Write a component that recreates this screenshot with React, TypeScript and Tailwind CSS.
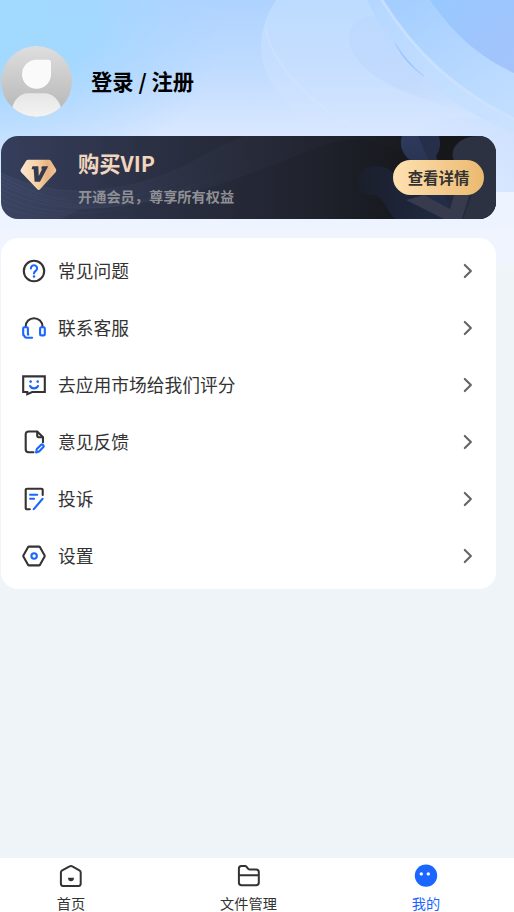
import type { ReactNode } from 'react';

type MenuItem = {
  label: string;
  icon: ReactNode;
};

const QuestionIcon = () => (
  <svg viewBox="0 0 24 24" className="h-6 w-6" fill="none" strokeLinecap="round" strokeLinejoin="round">
    <circle cx="12" cy="12" r="10.2" stroke="#333" strokeWidth="2.1" />
    <path d="M8.9 9.4A3.1 3.1 0 1 1 13.6 12C12.5 12.7 12 13.2 12 14.5" stroke="#1a66ff" strokeWidth="2.1" />
    <circle cx="12" cy="17.6" r="1.25" fill="#1a66ff" />
  </svg>
);

const HeadsetIcon = () => (
  <svg viewBox="0 0 24 24" className="h-6 w-6 overflow-visible" fill="none" strokeLinecap="round" strokeLinejoin="round">
    <path d="M3.7 10.6C3.7 5.6 7.4 2.3 12 2.3S20.5 5.6 20.5 10.6" stroke="#333" strokeWidth="2.1" />
    <rect x="18.1" y="11.2" width="4.7" height="8.2" rx="1.2" stroke="#1a66ff" strokeWidth="2.1" />
    <path d="M5.9 18.6V12.2Q5.9 11.2 4.9 11.2H2.3Q1.2 11.2 1.2 12.3V18.8Q1.2 19.4 2.1 19.4V19.6Q2.6 21.7 4.8 21.7H10.1M5.9 18.6H6.3" stroke="#1a66ff" strokeWidth="2.1" />
  </svg>
);

const RatingIcon = () => (
  <svg viewBox="0 0 24 24" className="h-6 w-6 overflow-visible" fill="none" strokeLinecap="round">
    <path d="M1.2 3.4H22.8V19H10.2L5.3 21.1V19H1.2Z" stroke="#333" strokeWidth="2.1" strokeLinejoin="miter" />
    <circle cx="8.6" cy="8.6" r="1.3" fill="#1a66ff" />
    <circle cx="15.7" cy="8.6" r="1.3" fill="#1a66ff" />
    <path d="M8.1 13Q9.2 15.4 12 15.4T16 13" stroke="#1a66ff" strokeWidth="2.1" />
  </svg>
);

const FeedbackIcon = () => (
  <svg viewBox="0 0 24 24" className="h-6 w-6" fill="none" strokeLinecap="round" strokeLinejoin="round">
    <path d="M11.5 22.2H6.7Q3.7 22.2 3.7 19.2V4.3Q3.7 1.5 6.7 1.5H15.2L21 7.2V12.2" stroke="#333" strokeWidth="2.1" />
    <path d="M15.2 1.8V5.6Q15.2 7.2 16.8 7.2H20.6" stroke="#333" strokeWidth="2.1" />
    <path d="M14.1 22.4L14.8 19.1L19.2 14.8Q20 14.1 20.7 14.8L21.5 15.6Q22.1 16.3 21.4 17L17.1 21.5Z" stroke="#1a66ff" strokeWidth="2.1" />
  </svg>
);

const ComplaintIcon = () => (
  <svg viewBox="0 0 24 24" className="h-6 w-6" fill="none" strokeLinecap="round" strokeLinejoin="round">
    <path d="M7.8 22.3H5.1Q3.7 22.3 3.7 20.9V3.1Q3.7 1.7 5.1 1.7H19.2Q20.7 1.7 20.7 3.1V8" stroke="#333" strokeWidth="2.1" />
    <path d="M8.1 7.8H15.2M8.1 11.7H12.1M20.6 11.8L11.8 22.1" stroke="#1a66ff" strokeWidth="2.1" />
  </svg>
);

const SettingsIcon = () => (
  <svg viewBox="0 0 24 24" className="h-6 w-6" fill="none" strokeLinejoin="round">
    <path d="M7 2.6H17Q17.6 2.6 18 3.2L22.5 11.2Q22.9 12 22.5 12.8L18 20.8Q17.6 21.4 17 21.4H7Q6.4 21.4 6 20.8L1.5 12.8Q1.1 12 1.5 11.2L6 3.2Q6.4 2.6 7 2.6Z" stroke="#333" strokeWidth="2.1" />
    <circle cx="12.1" cy="12" r="2.7" stroke="#1a66ff" strokeWidth="2.1" />
  </svg>
);

const HomeIcon = () => (
  <svg viewBox="0 0 24 24" className="h-6 w-6 shrink-0" fill="none" strokeLinejoin="round">
    <path d="M12 2Q12.7 2 13.3 2.4L20.4 6.4Q21.7 7.2 21.7 8.5V19.8Q21.7 21.9 19.7 21.9H3.9Q1.9 21.9 1.9 19.8V8.5Q1.9 7.2 3.2 6.4L10.6 2.4Q11.3 2 12 2Z" stroke="#333" strokeWidth="2" />
    <path d="M8.9 13.7H15.1Q14.7 17.2 12 17.2T8.9 13.7Z" fill="#333" />
  </svg>
);

const FolderIcon = () => (
  <svg viewBox="0 0 24 24" className="h-6 w-6 shrink-0" fill="none" strokeLinejoin="round">
    <path d="M4.4 2H8.1Q9 2 9.6 2.8L11 4.7Q11.5 5.4 12.4 5.4H19.1Q21.8 5.4 21.8 8V18.5Q21.8 21.3 19.1 21.3H4.6Q1.9 21.3 1.9 18.5V4.5Q1.9 2 4.4 2ZM1.9 11.3H21.8" stroke="#333" strokeWidth="2" />
  </svg>
);

const MineIcon = () => (
  <svg viewBox="0 0 24 24" className="h-6 w-6 shrink-0">
    <circle cx="12" cy="11.6" r="11.2" fill="#1a66ff" />
    <circle cx="7.3" cy="9.9" r="1.7" fill="#fff" />
    <circle cx="14.3" cy="9.9" r="1.7" fill="#fff" />
  </svg>
);

const ChevronIcon = () => (
  <svg viewBox="0 0 10 16" className="h-4 w-2.5" fill="none">
    <path d="M1.8 1.9L7.9 8L1.8 14.1" stroke="#666" strokeWidth="2.1" strokeLinecap="round" strokeLinejoin="round" />
  </svg>
);

const Avatar = () => (
  <svg viewBox="0 0 71 71" className="h-[71px] w-[71px]">
    <defs>
      <linearGradient id="avatarBg" x1="0" y1="0" x2="0" y2="1">
        <stop stopColor="#dedede" />
        <stop offset="1" stopColor="#b4b4b4" />
      </linearGradient>
      <linearGradient id="avatarBody" x1="0" y1="0" x2="0" y2="1">
        <stop stopColor="#e6e6e6" />
        <stop offset="1" stopColor="#f3f3f3" />
      </linearGradient>
      <clipPath id="avatarClip">
        <circle cx="35.5" cy="35.5" r="35.5" />
      </clipPath>
    </defs>
    <g clipPath="url(#avatarClip)">
      <rect width="71" height="71" fill="url(#avatarBg)" />
      <path d="M35.5 13.8H47.5Q50 13.8 50 16.3V27.8A14.5 14.5 0 1 1 35.5 13.8Z" fill="#fafafa" />
      <path d="M10 66C12 54 19 47.2 27 47.2H43C52 47.2 59 54 61 66V71H10Z" fill="url(#avatarBody)" />
    </g>
  </svg>
);

const HeaderArt = () => (
  <svg viewBox="0 0 514 265" className="absolute inset-x-0 top-0 h-[265px] w-full">
    <defs>
      <linearGradient id="sky" x1="0" y1="0" x2="0" y2="1">
        <stop stopColor="#aed3ff" />
        <stop offset=".25" stopColor="#bfdbff" />
        <stop offset=".5" stopColor="#d8e7ff" />
        <stop offset=".73" stopColor="#e8f1ff" />
        <stop offset="1" stopColor="#f1f4ff" />
      </linearGradient>
      <radialGradient id="cyan" gradientUnits="userSpaceOnUse" cx="0" cy="0" r="1" gradientTransform="translate(0 10) scale(230 175)">
        <stop stopColor="#a2daff" />
        <stop offset=".4" stopColor="#a2d8ff" stopOpacity=".95" />
        <stop offset=".7" stopColor="#a6d6ff" stopOpacity=".45" />
        <stop offset="1" stopColor="#a9d4ff" stopOpacity="0" />
      </radialGradient>
      <linearGradient id="disc" x1="0" y1="0" x2="0" y2="1">
        <stop stopColor="#bddcff" />
        <stop offset=".5" stopColor="#cce1ff" stopOpacity=".6" />
        <stop offset="1" stopColor="#dae8ff" stopOpacity="0" />
      </linearGradient>
      <linearGradient id="leaf" x1="0" y1="0" x2="1" y2="1">
        <stop stopColor="#b1d0fd" stopOpacity=".25" />
        <stop offset=".5" stopColor="#b9d2fb" stopOpacity=".4" />
        <stop offset="1" stopColor="#d0e1ff" stopOpacity="0" />
      </linearGradient>
      <linearGradient id="outer" gradientUnits="userSpaceOnUse" x1="400" y1="0" x2="480" y2="128">
        <stop stopColor="#a4ceff" />
        <stop offset="1" stopColor="#c2deff" />
      </linearGradient>
      <linearGradient id="band" gradientUnits="userSpaceOnUse" x1="375" y1="0" x2="500" y2="128">
        <stop stopColor="#b5d7ff" />
        <stop offset="1" stopColor="#cbe2ff" />
      </linearGradient>
      <linearGradient id="corner" gradientUnits="userSpaceOnUse" x1="440" y1="0" x2="500" y2="75">
        <stop stopColor="#98c8ff" />
        <stop offset=".5" stopColor="#9ec5fd" />
        <stop offset="1" stopColor="#a3c3fb" />
      </linearGradient>
      <linearGradient id="fade" x1="0" y1="0" x2="1" y2="0">
        <stop stopColor="#c9deff" stopOpacity="0" />
        <stop offset="1" stopColor="#c9deff" stopOpacity=".6" />
      </linearGradient>
    </defs>
    <rect width="514" height="265" fill="url(#sky)" />
    <rect width="240" height="190" fill="url(#cyan)" />
    <path d="M276 0C248 42 256 95 330 135H514V0Z" fill="url(#disc)" />
    <path d="M266 28C268 62 320 117 375 135" fill="none" stroke="#dcecff" strokeOpacity=".3" strokeWidth="2" />
    <path d="M380 15C361 14 348 25 349 39C350 70 405 105 514 119L422 73C402 57 392 37 380 15Z" fill="url(#leaf)" />
    <path d="M410 132Q470 102 514 133V192H410Z" fill="url(#fade)" />
    <path d="M367 0C388 44 438 105 514 133V119C455 90 414 52 382 0Z" fill="url(#band)" />
    <path d="M382 0C414 52 455 90 514 119V0Z" fill="url(#outer)" />
    <path d="M382 0C414 52 455 90 514 119" fill="none" stroke="#cde3ff" strokeOpacity=".75" strokeWidth="3" />
    <path d="M430 0C452 32 477 56 514 73V0Z" fill="url(#corner)" />
    <path d="M395 43C402 57 411 67 424 76C413 67 403 56 395 43Z" fill="#97c4fd" stroke="#97c4fd" strokeOpacity=".5" strokeWidth=".8" />
    <rect y="192" width="514" height="73" fill="#eff4ff" fillOpacity=".75" />
  </svg>
);

const BannerArt = () => (
  <svg viewBox="0 0 495 83" className="absolute inset-0 h-full w-full">
    <defs>
      <linearGradient id="banner" x1="0" y1="0" x2="1" y2="0">
        <stop stopColor="#353e5b" />
        <stop offset=".35" stopColor="#292e40" />
        <stop offset=".65" stopColor="#1f212b" />
        <stop offset=".85" stopColor="#15171b" />
        <stop offset="1" stopColor="#16181c" />
      </linearGradient>
      <linearGradient id="wave" x1="0" y1="0" x2="1" y2="0">
        <stop stopColor="#59658a" stopOpacity=".5" />
        <stop offset="1" stopColor="#3d4355" stopOpacity=".12" />
      </linearGradient>
      <linearGradient id="knob" x1="0" y1="0" x2="1" y2="0">
        <stop stopColor="#1b1f2b" />
        <stop offset="1" stopColor="#202a45" />
      </linearGradient>
      <linearGradient id="stem" x1="0" y1="0" x2="0" y2="1">
        <stop stopColor="#2e3a5c" />
        <stop offset="1" stopColor="#222b45" />
      </linearGradient>
    </defs>
    <rect width="495" height="83" fill="url(#banner)" />
    <path d="M0 37C55 64 115 58 170 36C208 19 219 9 243 0H400L430 30C370-2 350-1 316 12C230 45 170 71 80 73L60 83H0Z" fill="url(#wave)" fillOpacity=".3" />
    <g fill="none" stroke="url(#wave)" strokeOpacity=".7" strokeWidth=".6">
      <path d="M0 40C75 84 140 68 240 18" />
      <path d="M0 44C70 84 140 76 250 24" />
      <path d="M0 48C70 84 130 78 245 30" />
      <path d="M0 53C50 78 110 82 215 44" />
      <path d="M0 58C40 80 90 82 160 66" />
      <path d="M0 63C30 80 65 82 105 74" />
      <path d="M0 69C20 80 45 82 70 79" />
      <path d="M0 37C55 64 115 58 170 36C208 19 219 9 243 0" />
    </g>
    <path d="M400 58H495V83H400Z" fill="#232a3d" />
    <path d="M357 46C357 35 366 30 375 30C385 30 392 35 396 42L430 60L449 83H394C386 74 381 60 374 59C363 60 357 55 357 46Z" fill="url(#knob)" />
    <path d="M401 0H438C441 10 437 18 435 20L437 26H412C404 23 398 12 401 0Z" fill="#252f49" />
    <path d="M401 0H417L449 73L424 60L411 24C401 19 398 9 401 0Z" fill="url(#stem)" />
    <path d="M477 0H495V83H462L471 58L454 27C446 12 460 0 477 0Z" fill="#2c3242" />
    <path d="M405 64L423 59L449 73L456 50H471L461 83H443Z" fill="#373b4d" />
  </svg>
);

const VipBadge = () => (
  <svg viewBox="0 0 37 32" className="ml-[19px] h-8 w-[37px]">
    <defs>
      <linearGradient id="gem" x1="0" y1="0" x2="1" y2="0">
        <stop stopColor="#fbe8ce" />
        <stop offset=".5" stopColor="#f5cfa5" />
        <stop offset=".75" stopColor="#e9b280" />
        <stop offset="1" stopColor="#f3c596" />
      </linearGradient>
    </defs>
    <path d="M8.4.8H28.8Q30.2.8 31 2L36 10.3Q36.8 11.8 35.6 13.2L20.3 30Q18.7 31.8 17.1 30L1.2 13.2Q0 11.8.8 10.4L6 2Q6.8.8 8.4.8Z" fill="url(#gem)" />
    <path d="M12.4 7.3H18.3L18.8 17L22.3 9.6H20.9L22.1 7.3H28.2L20 22.7H14.6L13.7 10.2H11.6Z" fill="#333a50" />
  </svg>
);

const menuItems: MenuItem[] = [
  { label: '常见问题', icon: <QuestionIcon /> },
  { label: '联系客服', icon: <HeadsetIcon /> },
  { label: '去应用市场给我们评分', icon: <RatingIcon /> },
  { label: '意见反馈', icon: <FeedbackIcon /> },
  { label: '投诉', icon: <ComplaintIcon /> },
  { label: '设置', icon: <SettingsIcon /> },
];

const tabs = [
  { label: '首页', icon: <HomeIcon />, active: false },
  { label: '文件管理', icon: <FolderIcon />, active: false },
  { label: '我的', icon: <MineIcon />, active: true },
];

const App = () => {
  return (
    <div className="relative flex h-[912px] w-[514px] flex-col overflow-hidden bg-[#eff4f8] font-['Noto_Sans_CJK_SC',sans-serif]">
      <HeaderArt />

      <main className="relative flex-1 pl-px pr-[18px] pt-[46px]">
        <button className="flex items-center gap-[19px]">
          <Avatar />
          <span className="pb-0.5 text-[21.3px] font-bold leading-8 text-black">登录 / 注册</span>
        </button>

        <section className="relative mt-[19px] flex h-[83px] items-center overflow-hidden rounded-[17px]">
          <BannerArt />
          <div className="relative flex w-full items-center pr-3">
            <div className="-mt-1.5">
              <VipBadge />
            </div>
            <div className="ml-[21px] flex-1">
              <h2 className="text-[21.3px] font-bold leading-8 text-[#f1d6bd]">购买VIP</h2>
              <p className="mt-[5px] pb-px text-[14.2px] font-bold leading-6 text-[#8f9095]">
                开通会员，尊享所有权益
              </p>
            </div>
            <button className="h-[35px] w-[91px] rounded-full bg-linear-to-r from-[#fee1b1] to-[#ebb96f] text-[15.4px] font-bold text-[#333]">
              查看详情
            </button>
          </div>
        </section>

        <ul className="mt-[19px] h-[351px] rounded-[17px] bg-white pt-[5px]">
          {menuItems.map((item) => (
            <li key={item.label} className="flex h-[56.9px] items-center pl-[21px] pr-[23px]">
              {item.icon}
              <span className="ml-3 flex-1 pb-0.5 text-[17.75px] leading-6 text-[#333]">{item.label}</span>
              <ChevronIcon />
            </li>
          ))}
        </ul>
      </main>

      <nav className="relative flex h-[54px] justify-between bg-white pl-[26px] pr-[43px]">
        {tabs.map((tab) => (
          <button key={tab.label} className="flex w-[90px] flex-col items-center pt-1.5">
            {tab.icon}
            <span
              className={
                tab.active
                  ? 'mt-[7px] text-[14.2px] leading-4 text-[#1a66ff]'
                  : 'mt-[7px] text-[14.2px] leading-4 text-[#333]'
              }
            >
              {tab.label}
            </span>
          </button>
        ))}
      </nav>
    </div>
  );
};

export default App;
